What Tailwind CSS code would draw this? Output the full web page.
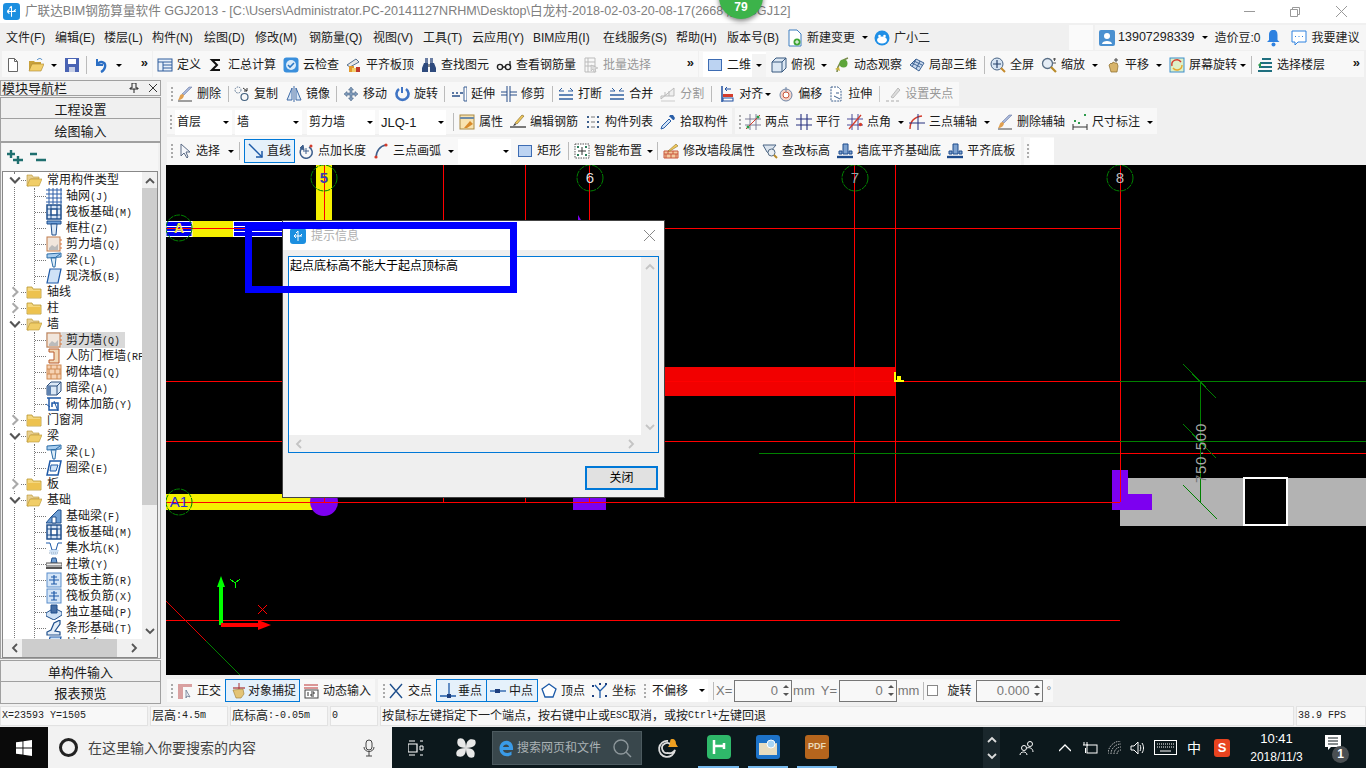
<!DOCTYPE html>
<html lang="zh">
<head>
<meta charset="utf-8">
<title>GGJ2013</title>
<script src="https://cdn.jsdelivr.net/npm/@tailwindcss/browser@4"></script>
</head>
<body class="w-[1366px] h-[768px] overflow-hidden bg-[#f0f0f0] text-[12px] leading-none text-[#1a1a1a] font-['Liberation_Sans','Noto_Sans_CJK_SC',sans-serif]">

<!-- icon sprite -->
<svg class="hidden" xmlns="http://www.w3.org/2000/svg">
  <symbol id="new" viewBox="0 0 16 16"><path d="M3.5 1.5h6l3 3v10h-9z" fill="#fff" stroke="#666"/><path d="M9.5 1.5v3h3" fill="none" stroke="#666"/></symbol>
  <symbol id="open" viewBox="0 0 16 16"><path d="M1 4h5l1 1h6v2H5l-2 6H1z" fill="#c9a23c"/><path d="M4 7h12l-3 7H1z" fill="#f2cf6b" stroke="#a9842c" stroke-width=".6"/><path d="M9 3c2-2 4-2 5 0" stroke="#3f7fc0" fill="none"/></symbol>
  <symbol id="save" viewBox="0 0 16 16"><rect x="1" y="1" width="14" height="14" fill="#4a64b4"/><rect x="4" y="2" width="8" height="5" fill="#fff"/><rect x="5" y="10" width="6" height="5" fill="#c7cfe6"/></symbol>
  <symbol id="undo" viewBox="0 0 16 16"><path d="M4 2v6h6" stroke="#2c6fc4" stroke-width="2" fill="none"/><path d="M4 8c3-5 9-3 8 2-.4 2-2 4-4 5" stroke="#2c6fc4" stroke-width="2.4" fill="none"/></symbol>
  <symbol id="define" viewBox="0 0 16 16"><rect x="1" y="2" width="14" height="12" fill="#e8f0fa" stroke="#2f5c9c"/><path d="M1 5h14M6 5v9M6 8h9M6 11h9" stroke="#2f5c9c"/></symbol>
  <symbol id="sigma" viewBox="0 0 16 16"><path d="M12 3H4l5 5-5 5h8" fill="none" stroke="#111" stroke-width="2"/></symbol>
  <symbol id="cloud" viewBox="0 0 16 16"><rect x=".5" y=".5" width="15" height="15" rx="3" fill="#3a8fdc"/><circle cx="8" cy="8" r="5" fill="#dcecfa"/><path d="M5 8l2 2 4-4" stroke="#2b78c4" stroke-width="1.6" fill="none"/></symbol>
  <symbol id="flat" viewBox="0 0 16 16"><path d="M1 8l9-6 3 3-9 5z" fill="#e7e7e7" stroke="#56708f"/><rect x="3" y="9" width="5" height="6" fill="#e39a2c"/><rect x="10" y="10" width="4" height="5" fill="#c0392b"/><rect x="6" y="11" width="4" height="4" fill="#f2cf6b"/></symbol>
  <symbol id="binoc" viewBox="0 0 16 16"><path d="M4 1h3v5H4zM9 1h3v5H9z" fill="#6b7ea3"/><path d="M3 6h4v9H1v-4zM9 6h4l2 5v4H9z" fill="#2e4a7d"/><path d="M7 7h2v3H7z" fill="#888"/></symbol>
  <symbol id="glasses" viewBox="0 0 16 16"><circle cx="4" cy="10" r="2.6" fill="none" stroke="#222" stroke-width="1.4"/><circle cx="12" cy="10" r="2.6" fill="none" stroke="#222" stroke-width="1.4"/><path d="M6.5 10h3M14 9V4" stroke="#222" stroke-width="1.3" fill="none"/></symbol>
  <symbol id="batch" viewBox="0 0 16 16"><path d="M2 1h10v14H2zM2 5h10M2 9h10M5 1v14" fill="none" stroke="#bbb"/><path d="M8 8l7 3-3 1 1 3-2 0-1-3-2 2z" fill="#ddd" stroke="#aaa" stroke-width=".5"/></symbol>
  <symbol id="square" viewBox="0 0 16 16"><rect x="1.5" y="2.5" width="13" height="11" fill="#bcd3f2" stroke="#3d6cb3"/></symbol>
  <symbol id="box" viewBox="0 0 16 16"><path d="M1 5l4-4h10v10l-4 4H1z" fill="#dbe7f3" stroke="#38597f"/><path d="M1 5h10v10M11 5l4-4" fill="none" stroke="#38597f"/></symbol>
  <symbol id="orbit" viewBox="0 0 16 16"><path d="M3 15C3 9 7 3 14 1" stroke="#7b8b4f" stroke-width="1.6" fill="none"/><circle cx="9.5" cy="6.5" r="4" fill="#5da53a"/><path d="M1 12l4-2 1 4z" fill="#c9b23a"/></symbol>
  <symbol id="cube3" viewBox="0 0 16 16"><path d="M1 8l6-6 8 4-5 8z" fill="#c9d9ee" stroke="#3d6394"/><path d="M5 4l8 4M3 6l8 4M7 2l-4 8M11 4l-4 8" stroke="#3d6394" fill="none"/></symbol>
  <symbol id="full" viewBox="0 0 16 16"><circle cx="7" cy="7" r="6" fill="#d6e4f3" stroke="#4a6484"/><path d="M7 3v8M3 7h8" stroke="#27426b" stroke-width="1.2"/><path d="M11 11l4 4" stroke="#c58a2a" stroke-width="2"/></symbol>
  <symbol id="mag" viewBox="0 0 16 16"><circle cx="6.5" cy="6.5" r="5" fill="#e5edf6" stroke="#5a6f86" stroke-width="1.3"/><path d="M10 10l5 5" stroke="#b98b2a" stroke-width="2.2"/><path d="M12 2h3M13.500 1v3M12 6h3" stroke="#555"/></symbol>
  <symbol id="hand" viewBox="0 0 16 16"><path d="M4 8l2-2 1 1 1-2 2 1 2 0 1 3-1 6H6z" fill="#d8b46a" stroke="#8a6a28" stroke-width=".7"/><path d="M11 1v4M9 3h4" stroke="#444"/></symbol>
  <symbol id="screen" viewBox="0 0 16 16"><rect x="1" y="1" width="14" height="14" fill="#dff0c8" stroke="#3a8dc9"/><path d="M3 9a5 5 0 0 1 9-4" stroke="#d43c2c" stroke-width="1.4" fill="none"/><path d="M13 8a5 5 0 0 1-9 3" stroke="#e5a92c" stroke-width="1.4" fill="none"/></symbol>
  <symbol id="floors" viewBox="0 0 16 16"><path d="M1 14h14M2 10h13M3 6h12M5 2h9" stroke="#1f6f7f" stroke-width="2"/><path d="M1 8l3-3v6z" fill="#2e9b4c"/></symbol>
  <symbol id="brush" viewBox="0 0 16 16"><path d="M15 1L7 9l-2-1 7-7z" fill="#a7b7d8" stroke="#5e6d9c" stroke-width=".5"/><path d="M7 9c0 3-3 5-6 5 2-2 1-5 4-6z" fill="#e0a050"/><path d="M1 15h14" stroke="#444"/></symbol>
  <symbol id="copy" viewBox="0 0 16 16"><circle cx="4" cy="4" r="3" fill="none" stroke="#5b7492" stroke-dasharray="1.500 1"/><circle cx="10.500" cy="11" r="3.500" fill="none" stroke="#42617f" stroke-width="1.200"/><path d="M9 2l4 3M13 2v3h-3" stroke="#333" fill="none"/></symbol>
  <symbol id="mirror" viewBox="0 0 16 16"><path d="M6 2L1 14h5zM10 2l5 12h-5z" fill="#dbe8f6" stroke="#3f6ba6"/><path d="M8 0v16" stroke="#3f6ba6"/></symbol>
  <symbol id="move" viewBox="0 0 16 16"><path d="M8 1l2.500 3H9v3h3V5.500L15 8l-3 2.500V9H9v3h1.500L8 15l-2.500-3H7V9H4v1.500L1 8l3-2.500V7h3V4H5.500z" fill="#7f9ab9" stroke="#3f5a7c" stroke-width=".5"/></symbol>
  <symbol id="rot" viewBox="0 0 16 16"><path d="M5 3a6 6 0 1 0 7 0" fill="none" stroke="#3f74c4" stroke-width="2.600"/><path d="M8 1v6" stroke="#3f74c4" stroke-width="2"/></symbol>
  <symbol id="extend" viewBox="0 0 16 16"><path d="M13 1h3v14h-3z" fill="#fff" stroke="#3a5e93"/><path d="M1 7h2M5 7h2M9 7h3M1 10h8" stroke="#274d88" stroke-width="1.300"/></symbol>
  <symbol id="trim" viewBox="0 0 16 16"><path d="M6 0v16M9 0v16" stroke="#274d88"/><path d="M0 6h6M0 9h6M9 6h7M9 9h7" stroke="#274d88"/></symbol>
  <symbol id="break" viewBox="0 0 16 16"><path d="M1 9h14M1 13h14" stroke="#2e5fa0" stroke-width="1.300"/><path d="M1 5l3-3M1 5h5M15 5l-3-3M15 5h-5" stroke="#2e5fa0" fill="none"/></symbol>
  <symbol id="merge" viewBox="0 0 16 16"><path d="M1 9h14M1 13h14" stroke="#2e5fa0" stroke-width="1.300"/><path d="M6 5L3 2M6 5H1M10 5l3-3M10 5h5" stroke="#2e5fa0" fill="none"/></symbol>
  <symbol id="split" viewBox="0 0 16 16"><path d="M1 13L14 2v8H1zM5 10V6M9 10V5" fill="#eee" stroke="#bbb"/><path d="M1 15h14" stroke="#ccc"/></symbol>
  <symbol id="align" viewBox="0 0 16 16"><path d="M3 0v16" stroke="#1f4fa0" stroke-width="1.500"/><path d="M12 3H6M8 1L6 3l2 2" stroke="#1f4fa0" fill="none"/><rect x="4" y="8" width="10" height="3" fill="#d43c2c"/><rect x="4" y="12" width="10" height="3" fill="#fff" stroke="#1f4fa0"/></symbol>
  <symbol id="offset" viewBox="0 0 16 16"><circle cx="8" cy="9" r="6" fill="#f6d3c8" stroke="#6d86a8"/><circle cx="8" cy="9" r="3" fill="#fff" stroke="#c9563c"/><path d="M8 1v5" stroke="#6d86a8"/></symbol>
  <symbol id="stretch" viewBox="0 0 16 16"><path d="M3 1h7l3 3v11H3z" fill="#fff" stroke="#3d5f8c" stroke-dasharray="2 1"/><path d="M6 10l6 3M8 7h3" stroke="#3d5f8c"/></symbol>
  <symbol id="grab" viewBox="0 0 16 16"><path d="M6 11l7-9 2 2-7 8z" fill="#ddd" stroke="#bbb"/><path d="M1 15h3M6 15h3M11 15h3" stroke="#aaa"/></symbol>
  <symbol id="prop" viewBox="0 0 16 16"><rect x="1" y="1" width="14" height="14" fill="#f8e3b0" stroke="#a98a45"/><path d="M1 4h14" stroke="#6f8ca8" stroke-width="2"/><path d="M5 14l6-7 3 3-6 4z" fill="#d88a2a"/></symbol>
  <symbol id="editbar" viewBox="0 0 16 16"><path d="M14 2L7 10l-2-1 7-8z" fill="#f0c95a" stroke="#7a5e20" stroke-width=".6"/><path d="M5 9l-2 3 3-1z" fill="#333"/><path d="M0 13h16" stroke="#333" stroke-width="1.300"/></symbol>
  <symbol id="list" viewBox="0 0 16 16"><path d="M2 2h2v2H2zM2 7h2v2H2zM2 12h2v2H2zM12 2h2v2h-2zM12 7h2v2h-2zM12 12h2v2h-2z" fill="#3d5f8c"/><path d="M6 3h4M6 8h4M6 13h4" stroke="#777"/></symbol>
  <symbol id="pick" viewBox="0 0 16 16"><path d="M1 15l1-3 7-7 2 2-7 7z" fill="#cfe2f6" stroke="#2a5fa8"/><path d="M9 3l1-2 3 0 2 3-1 2-1 0-3-3z" fill="#2a5fa8"/></symbol>
  <symbol id="twopt" viewBox="0 0 16 16"><path d="M5 0v16M11 0v16M0 5h16M0 11h16" stroke="#6f6f8c" stroke-width=".9"/><path d="M1 15L15 1" stroke="#d43c2c"/><circle cx="3" cy="13" r="1.500" fill="#2e9b4c"/><circle cx="13" cy="3" r="1.500" fill="#2e9b4c"/></symbol>
  <symbol id="par" viewBox="0 0 16 16"><path d="M5 0v16M11 0v16M0 5h16M0 11h16" stroke="#27307f" stroke-width="1.100"/></symbol>
  <symbol id="angle" viewBox="0 0 16 16"><path d="M5 0v16M11 0v16M0 5h16M0 11h16" stroke="#39398c" stroke-width=".9"/><path d="M2 15L14 1" stroke="#d43c2c" stroke-width="1.300"/><circle cx="13.500" cy="10.500" r="1.700" fill="#d43c2c"/></symbol>
  <symbol id="axis3" viewBox="0 0 16 16"><path d="M1 15c0-7 4-12 12-13" stroke="#d43c2c" stroke-width="1.400" fill="none"/><path d="M9 0v16M0 9h16" stroke="#27307f"/></symbol>
  <symbol id="dim" viewBox="0 0 16 16"><path d="M1 13h14M1 10v6M15 10v6" stroke="#333"/><path d="M2 6h2v2H2zM12 0h2v2h-2zM6 8h2v2H6z" fill="#2e9b4c"/></symbol>
  <symbol id="pointer" viewBox="0 0 16 16"><path d="M5 1v12l3-3 3 5 1-1-2-5h4z" fill="#f4f6fa" stroke="#5a6a84"/></symbol>
  <symbol id="line" viewBox="0 0 16 16"><path d="M1 1l13 13" stroke="#1c5aa8" stroke-width="1.500"/><path d="M14 8v6H8" stroke="#1c5aa8" stroke-width="1.500" fill="none"/></symbol>
  <symbol id="ptlen" viewBox="0 0 16 16"><path d="M11 4a6 6 0 1 1-7 1" fill="none" stroke="#3e5f8c" stroke-width="1.500"/><path d="M5 2l1 5-4-2zM5 8h6M8 5v6" fill="#3e5f8c" stroke="#3e5f8c"/><circle cx="13" cy="3" r="1.500" fill="#d43c2c"/></symbol>
  <symbol id="arc" viewBox="0 0 16 16"><path d="M3 15C3 8 7 3 13 2" fill="none" stroke="#3e5f8c" stroke-width="1.500"/><circle cx="13" cy="2" r="1.600" fill="#d43c2c"/><circle cx="3" cy="14" r="1.600" fill="#d43c2c"/></symbol>
  <symbol id="smart" viewBox="0 0 16 16"><rect x="1" y="1" width="14" height="14" fill="#fff" stroke="#555" stroke-dasharray="1.500 1"/><path d="M8 4v8M4 8h8" stroke="#333"/><path d="M3 3h2v2H3zM11 3h2v2h-2zM3 11h2v2H3zM11 11h2v2h-2z" fill="#2e7f5c"/></symbol>
  <symbol id="wallprop" viewBox="0 0 16 16"><path d="M1 8h14v7H1z" fill="#f3c9a0" stroke="#c9563c"/><path d="M1 11h14M5 8v3M10 8v3M3 11v4M8 11v4M13 11v4" stroke="#c9563c"/><path d="M5 8l8-7 2 2-8 5z" fill="#f0c95a" stroke="#7a5e20" stroke-width=".5"/></symbol>
  <symbol id="check" viewBox="0 0 16 16"><path d="M1 2h13L8 9v2L5 9z" fill="#dbe4ee" stroke="#4a6484"/><circle cx="9.500" cy="9.500" r="3.500" fill="#e9eef4" stroke="#556b84"/><path d="M12 12l3 3" stroke="#b98b2a" stroke-width="2"/></symbol>
  <symbol id="base" viewBox="0 0 16 16"><path d="M6 1h5v10H6zM2 8h3v3H2zM12 8h3v3h-3z" fill="#7fa2cf" stroke="#1c4a8c"/><path d="M0 14h16" stroke="#1c4a8c" stroke-width="2.400"/></symbol>
  <symbol id="ortho" viewBox="0 0 16 16"><path d="M1 1h14v3H6v12H1z" fill="#d9a0a0"/><path d="M9 7l4 7-3-1-1 2z" fill="#eef2f7" stroke="#5a6a84" stroke-width=".7"/></symbol>
  <symbol id="snap" viewBox="0 0 16 16"><path d="M3 5h12" stroke="#a33" stroke-width="1.200"/><path d="M9 0v6" stroke="#a33"/><path d="M3 7l10-1 1 5-3 4H6z" fill="#e3c476" stroke="#9a7a30" stroke-width=".6"/></symbol>
  <symbol id="dyn" viewBox="0 0 16 16"><path d="M1 2h14M1 5h14" stroke="#b33" stroke-width="1.200"/><rect x="2" y="7" width="13" height="8" fill="#fff" stroke="#444"/><path d="M5 9v4M8 9h3v2H8v2h3" stroke="#333" fill="none"/></symbol>
  <symbol id="cross" viewBox="0 0 16 16"><path d="M2 1l12 14M14 1L2 15" stroke="#1f4f8c" stroke-width="1.400"/></symbol>
  <symbol id="perp" viewBox="0 0 16 16"><path d="M0 13h16M9 0v13" stroke="#1c5aa8" stroke-width="1.300"/><rect x="7" y="11" width="4" height="4" fill="#1c3f7f"/></symbol>
  <symbol id="midp" viewBox="0 0 16 16"><path d="M0 8h16" stroke="#1c5aa8" stroke-width="1.300"/><rect x="5" y="6" width="5" height="4" fill="#1c3f7f"/></symbol>
  <symbol id="vert" viewBox="0 0 16 16"><path d="M8 1l7 5-3 8H4L1 6z" fill="#fff" stroke="#1c5aa8" stroke-width="1.300"/></symbol>
  <symbol id="coord" viewBox="0 0 16 16"><path d="M3 2l5 6 6-6M8 8v7" stroke="#1c5aa8" fill="none" stroke-width="1.300"/><path d="M0 2h2v2H0zM13 0h2v2h-2zM0 12h2v2H0zM13 12h2v2h-2zM7 0h2v2H7z" fill="#1c3f7f"/></symbol>
  <symbol id="folder" viewBox="0 0 16 16"><path d="M1 3h5l1 2h8v9H1z" fill="#f5d77e" stroke="#b8962f" stroke-width=".8"/><path d="M1.500 7h13v6.500h-13z" fill="#edc24f"/></symbol>
  <symbol id="folderopen" viewBox="0 0 16 16"><path d="M1 3h5l1 2h6v2H5l-2 7H1z" fill="#e8cf8f" stroke="#b8962f" stroke-width=".6"/><path d="M4 7h12l-3 7H1z" fill="#f0cd68" stroke="#b8962f" stroke-width=".6"/></symbol>
  <symbol id="t-grid" viewBox="0 0 16 16"><path d="M3 0v16M7 0v16M11 0v16M15 0v16M0 2h16M0 6h16M0 10h16M0 14h16" stroke="#2d5ea8"/></symbol>
  <symbol id="t-raft" viewBox="0 0 16 16"><rect x="1" y="1" width="14" height="14" fill="#d9e6f5" stroke="#1f4f8c" stroke-width="1.500"/><rect x="5" y="5" width="6" height="6" fill="#fff" stroke="#1f4f8c"/><path d="M1 5h14M1 11h14M5 1v14M11 1v14" stroke="#1f4f8c"/></symbol>
  <symbol id="t-col" viewBox="0 0 16 16"><path d="M1 1h14v3H1z" fill="#6fa0d8" stroke="#1f4f8c"/><path d="M5 4h6l-1 11H6z" fill="#dbe8f6" stroke="#1f4f8c"/></symbol>
  <symbol id="t-wall" viewBox="0 0 16 16"><rect x="1" y="1" width="13" height="14" fill="#f1e6dc" stroke="#c07a4a"/><path d="M3 12l3-3 3 2 3-3v6H3z" fill="#bbb"/><path d="M14 4h2M14 8h2M14 12h2" stroke="#d8743a"/></symbol>
  <symbol id="t-beam" viewBox="0 0 16 16"><path d="M1 2l14-1v4L1 6z" fill="#a8cdee" stroke="#2d6ea8"/><path d="M5 6h5l-1 9H7z" fill="#dcecf8" stroke="#2d6ea8"/><path d="M10 5l4-3" stroke="#2d6ea8"/></symbol>
  <symbol id="t-slab" viewBox="0 0 16 16"><path d="M4 1h11l-3 14H1z" fill="#cfe2f6" stroke="#1f5aa8" stroke-width="1.200"/></symbol>
  <symbol id="t-door" viewBox="0 0 16 16"><path d="M3 1h10v14H3v-3h5V4H3z" fill="#f2d9b8" stroke="#b85a2a"/></symbol>
  <symbol id="t-brick" viewBox="0 0 16 16"><rect x="1" y="1" width="14" height="14" fill="#f6d3b4" stroke="#d08a52"/><path d="M1 5h14M1 10h14M5 1v4M11 1v4M3 5v5M9 5v5M14 5v5M5 10v5M11 10v5" stroke="#d08a52"/></symbol>
  <symbol id="t-dark" viewBox="0 0 16 16"><path d="M1 6l4-4h10v9l-4 4H1z" fill="#dbe8f6" stroke="#2d4f7c"/><path d="M1 6h10v9M11 6l4-4" fill="none" stroke="#2d4f7c"/><rect x="1" y="6" width="4" height="9" fill="#5e82b0"/></symbol>
  <symbol id="t-rebar" viewBox="0 0 16 16"><path d="M1 2h14M3 2v12h9V7H6v4" fill="none" stroke="#1f5aa8" stroke-width="1.500"/><path d="M0 8l4 3M8 5l4 10" stroke="#1f5aa8"/></symbol>
  <symbol id="t-ring" viewBox="0 0 16 16"><path d="M4 1h11l-3 14H1z" fill="#fff" stroke="#1f5aa8" stroke-width="1.500"/><path d="M5 5h7l-2 6H4z" fill="#cfe2f6" stroke="#1f5aa8"/></symbol>
  <symbol id="t-fbeam" viewBox="0 0 16 16"><path d="M0 15l5-6 7-7 3 0v13z" fill="#6f9fd4" stroke="#1f4f8c"/><path d="M6 15V9h4v6z" fill="#fff" stroke="#1f4f8c"/></symbol>
  <symbol id="t-pit" viewBox="0 0 16 16"><path d="M0 3h4l2 7h4l2-7h4" fill="none" stroke="#1f5aa8"/><path d="M3 10h10l-2 5H5z" fill="#cfe2f6"/><path d="M3 13h10" stroke="#9ab" stroke-dasharray="1 1"/></symbol>
  <symbol id="t-pier" viewBox="0 0 16 16"><path d="M6 2h4l1 5H5z" fill="#6f9fd4" stroke="#1f4f8c"/><rect x="0" y="7" width="16" height="3" fill="#eee" stroke="#555"/><rect x="0" y="11" width="16" height="2" fill="#555"/></symbol>
  <symbol id="t-rmain" viewBox="0 0 16 16"><rect x="1" y="1" width="14" height="14" fill="#d4e5f7" stroke="#5a8ecb"/><path d="M3 8h10M8 3v9M5 5h6M5 12h6" stroke="#1f5aa8" stroke-width="1.200"/></symbol>
  <symbol id="t-iso" viewBox="0 0 16 16"><path d="M0 9l8-5 8 4v3l-8 5-8-4z" fill="#cfe2f6" stroke="#1f4f8c"/><path d="M5 1h6v8H5z" fill="#466fa5" stroke="#1f4f8c"/></symbol>
  <symbol id="t-strip" viewBox="0 0 16 16"><path d="M1 15v-3l4-2 3-7 6-3v4L9 11l5 1v3z" fill="#e4eef8" stroke="#1f4f8c" stroke-width="1.200"/></symbol>
  <symbol id="up" viewBox="0 0 10 10"><path d="M1 7l4-4 4 4" fill="none" stroke="currentColor" stroke-width="1.800"/></symbol>
  <symbol id="down" viewBox="0 0 10 10"><path d="M1 3l4 4 4-4" fill="none" stroke="currentColor" stroke-width="1.800"/></symbol>
  <symbol id="left" viewBox="0 0 10 10"><path d="M7 1L3 5l4 4" fill="none" stroke="currentColor" stroke-width="1.800"/></symbol>
  <symbol id="right" viewBox="0 0 10 10"><path d="M3 1l4 4-4 4" fill="none" stroke="currentColor" stroke-width="1.800"/></symbol>
  <symbol id="appmark" viewBox="0 0 16 16"><rect width="16" height="16" rx="3" fill="#1c8fe0"/><path d="M8 3v10M4 8h8M4 8l2-2M4 8l2 2M12 6l-2 2M8 3L6 5" stroke="#fff" fill="none"/></symbol>
</svg>

<!-- title bar -->
<header class="h-[23px] bg-white flex items-center relative">
  <svg class="w-[17px] h-[17px] ml-[3px]"><use href="#appmark"/></svg>
  <span class="ml-[5px] text-[12.6px] text-[#808080] whitespace-nowrap">广联达BIM钢筋算量软件 GGJ2013 - [C:\Users\Administrator.PC-20141127NRHM\Desktop\白龙村-2018-02-03-20-08-17(2668 版).GGJ12]</span>
  <div class="absolute left-[719px] top-[-25px] w-[44px] h-[44px] rounded-full bg-[#3cb34a] shadow-[0_2px_5px_rgba(0,0,0,0.5)] flex items-end justify-center pb-[6px] text-white font-bold text-[12px]">79</div>
  <div class="ml-auto flex items-center text-[#8a8a8a]">
    <span class="w-[11px] h-px bg-[#999] mr-[35px]"></span>
    <svg class="w-[10px] h-[10px] mr-[36px]" viewBox="0 0 10 10"><path d="M.5 2.500h7v7h-7zM2.500 2.500v-2h7v7h-2" fill="none" stroke="#999"/></svg>
    <svg class="w-[11px] h-[11px] mr-[19px]" viewBox="0 0 11 11"><path d="M0 0l11 11M11 0L0 11" stroke="#999"/></svg>
  </div>
</header>

<!-- menu bar -->
<nav class="h-[27px] pt-[2px] flex items-center text-[#222] whitespace-nowrap">
  <a class="ml-[6px] w-[49px]">文件(F)</a>
  <a class="w-[49px]">编辑(E)</a>
  <a class="w-[48px]">楼层(L)</a>
  <a class="w-[52px]">构件(N)</a>
  <a class="w-[51px]">绘图(D)</a>
  <a class="w-[54px]">修改(M)</a>
  <a class="w-[64px]">钢筋量(Q)</a>
  <a class="w-[50px]">视图(V)</a>
  <a class="w-[49px]">工具(T)</a>
  <a class="w-[61px]">云应用(Y)</a>
  <a class="w-[70px]">BIM应用(I)</a>
  <a class="w-[73px]">在线服务(S)</a>
  <a class="w-[51px]">帮助(H)</a>
  <a class="w-[60px]">版本号(B)</a>
  <svg class="w-4 h-[18px]" viewBox="0 0 16 18"><path d="M2 1h8l4 4v12H2z" fill="#fff" stroke="#3f7fc0"/><circle cx="10" cy="13" r="3.500" fill="#3fa535"/><path d="M8 13h4M10 11v4" stroke="#fff"/></svg>
  <a class="ml-[4px]">新建变更</a>
  <span class="ml-[7px] w-0 h-0 border-x-[3px] border-t-[3px] border-x-transparent border-t-black"></span>
  <svg class="ml-[6px] w-4 h-4" viewBox="0 0 16 16"><circle cx="8" cy="8" r="7.500" fill="#1f8fe6"/><ellipse cx="8" cy="10" rx="5" ry="3.500" fill="#fff"/><circle cx="5.500" cy="6" r="1.300" fill="#fff"/><circle cx="10.500" cy="6" r="1.300" fill="#fff"/></svg>
  <a class="ml-[4px]">广小二</a>
  <span class="ml-[139px] w-[24px] h-[25px] bg-[#fafafa]"></span>
  <div class="ml-[2px] flex items-center bg-[#f6f6f6] h-[25px] flex-1">
    <svg class="ml-[4px] w-4 h-4" viewBox="0 0 16 16"><rect width="16" height="16" rx="2" fill="#4a90d0"/><circle cx="8" cy="6" r="3" fill="#fff"/><path d="M3 14c0-4 10-4 10 0z" fill="#fff"/></svg>
    <span class="ml-[3px] text-[12.5px]">13907298339</span>
    <span class="ml-[7px] w-0 h-0 border-x-[3px] border-t-[3px] border-x-transparent border-t-black"></span>
    <span class="ml-[7px]">造价豆:0</span>
    <svg class="ml-[6px] w-[13px] h-[18px]" viewBox="0 0 13 18"><path d="M6.500 1c3 0 4 2 4 5v5l2 2H0l2-2V6c0-3 1-5 4.500-5z" fill="#2f82e0"/><circle cx="6.500" cy="15.500" r="2" fill="#2f82e0"/></svg>
    <svg class="ml-[11px] w-4 h-4" viewBox="0 0 16 16"><path d="M1 1h14v11H7l-3 3v-3H1z" fill="#fff" stroke="#2f82e0"/><path d="M4 6.500h1M7.500 6.500h1M11 6.500h1" stroke="#2f82e0"/></svg>
    <span class="ml-[5px]">我要建议</span>
  </div>
</nav>

<!-- main toolbar -->
<div class="h-[30px] pt-px flex whitespace-nowrap [&_svg]:w-4 [&_svg]:h-4">
  <div class="ml-[2px] w-[150px] h-[26px] pt-[2px] bg-[#f8f8f8] flex items-center">
    <svg class="ml-[3px]"><use href="#new"/></svg>
    <svg class="ml-[7px]"><use href="#open"/></svg>
    <span class="ml-[7px] w-0 h-0 border-x-[3px] border-t-[3px] border-x-transparent border-t-black"></span>
    <svg class="ml-[7px]"><use href="#save"/></svg>
    <span class="ml-[6px] w-px h-[18px] bg-[#bbb]"></span>
    <svg class="ml-[6px]"><use href="#undo"/></svg>
    <span class="ml-[7px] w-0 h-0 border-x-[3px] border-t-[3px] border-x-transparent border-t-black"></span>
    <span class="ml-auto mr-[4px] mb-[6px] text-[13px] font-bold">»</span>
  </div>
  <div class="ml-px w-[545px] h-[26px] pt-[2px] bg-[#f8f8f8] flex items-center">
    <div class="ml-[4px] flex items-center gap-1"><svg><use href="#define"/></svg><span>定义</span></div>
    <div class="ml-[7px] flex items-center gap-1"><svg><use href="#sigma"/></svg><span>汇总计算</span></div>
    <div class="ml-[7px] flex items-center gap-1"><svg><use href="#cloud"/></svg><span>云检查</span></div>
    <div class="ml-[7px] flex items-center gap-1"><svg><use href="#flat"/></svg><span>平齐板顶</span></div>
    <div class="ml-[7px] flex items-center gap-1"><svg><use href="#binoc"/></svg><span>查找图元</span></div>
    <div class="ml-[7px] flex items-center gap-1"><svg><use href="#glasses"/></svg><span>查看钢筋量</span></div>
    <div class="ml-[7px] flex items-center gap-1 text-[#999]"><svg><use href="#batch"/></svg><span>批量选择</span></div>
    <span class="ml-auto mr-[4px] mb-[6px] text-[13px] font-bold">»</span>
  </div>
  <div class="ml-px flex-1 mr-[2px] h-[26px] bg-[#f8f8f8] flex items-center">
    <div class="ml-[4px] w-[63px] h-[25px] pt-[2px] bg-white flex items-center">
      <div class="ml-[4px] flex items-center gap-1"><svg><use href="#square"/></svg><span>二维</span></div>
      <span class="flex-1 h-full ml-[1px] bg-[#f3f3f3] flex items-center justify-center"><span class="w-0 h-0 border-x-[3px] border-t-[3px] border-x-transparent border-t-black"></span></span>
    </div>
    <div class="flex flex-1 items-center h-full pt-[2px]">
      <div class="ml-[5px] flex items-center gap-1"><svg><use href="#box"/></svg><span>俯视</span></div>
      <span class="ml-[6px] w-0 h-0 border-x-[3px] border-t-[3px] border-x-transparent border-t-black"></span>
      <div class="ml-[7px] flex items-center gap-1"><svg><use href="#orbit"/></svg><span>动态观察</span></div>
      <div class="ml-[7px] flex items-center gap-1"><svg><use href="#cube3"/></svg><span>局部三维</span></div>
      <span class="ml-[7px] w-px h-[18px] bg-[#bbb]"></span>
      <div class="ml-[5px] flex items-center gap-1"><svg><use href="#full"/></svg><span>全屏</span></div>
      <div class="ml-[7px] flex items-center gap-1"><svg><use href="#mag"/></svg><span>缩放</span></div>
      <span class="ml-[7px] w-0 h-0 border-x-[3px] border-t-[3px] border-x-transparent border-t-black"></span>
      <div class="ml-[7px] flex items-center gap-1"><svg><use href="#hand"/></svg><span>平移</span></div>
      <span class="ml-[7px] w-0 h-0 border-x-[3px] border-t-[3px] border-x-transparent border-t-black"></span>
      <div class="ml-[7px] flex items-center gap-1"><svg><use href="#screen"/></svg><span>屏幕旋转</span></div>
      <span class="ml-[3px] w-0 h-0 border-x-[3px] border-t-[3px] border-x-transparent border-t-black"></span>
      <span class="ml-[5px] w-px h-[18px] bg-[#bbb]"></span>
      <div class="ml-[5px] flex items-center gap-1"><svg><use href="#floors"/></svg><span>选择楼层</span></div>
      <span class="ml-auto mr-[4px] mb-[6px] text-[13px] font-bold">»</span>
    </div>
  </div>
</div>

<main class="h-[625px] flex">
  <!-- module navigator -->
  <aside class="w-[161px] flex flex-col shrink-0">
    <div class="h-[16px] border border-[#a0a0a0] bg-[#f0f0f0] flex items-center pl-px text-[13px]">
      <span class="flex-1">模块导航栏</span>
      <svg class="w-[10px] h-[10px]" viewBox="0 0 10 10"><path d="M3 0h4v5h2v1H1V5h2zM5 6v4" fill="none" stroke="#222"/></svg>
      <svg class="ml-[10px] mr-[3px] w-[8px] h-[8px]" viewBox="0 0 8 8"><path d="M0 0l8 8M8 0L0 8" stroke="#333"/></svg>
    </div>
    <button class="mt-px h-[22px] pt-[2px] w-full border border-[#a0a0a0] bg-[#f0f0f0] text-[13px]">工程设置</button>
    <button class="h-[23px] pt-[2px] w-full border border-t-0 border-[#a0a0a0] bg-[#f0f0f0] text-[13px]">绘图输入</button>
    <div class="h-[517px] border border-[#a0a0a0] bg-[#f0f0f0] flex flex-col pl-px pr-[2px]">
      <div class="h-[28px] flex items-center bg-[#f6f6f6]">
        <svg class="ml-[5px] w-4 h-4" viewBox="0 0 16 16"><path d="M0 5h8M4 1v8M6 11h10M11 7v8" stroke="#1f6f6f" stroke-width="2.400"/></svg>
        <svg class="ml-[7px] w-4 h-4" viewBox="0 0 16 16"><path d="M0 5h7M6 11h10" stroke="#1f6f6f" stroke-width="2.400"/></svg>
      </div>
      <div class="flex-1 flex flex-col bg-white border border-[#888] min-h-0">
        <div class="flex-1 flex min-h-0">
          <div class="flex-1 overflow-hidden bg-white whitespace-nowrap pl-[11px] [&_i]:not-italic [&_i]:font-['Liberation_Mono',monospace] [&_i]:text-[10px] [&_svg]:w-4 [&_svg]:h-4 [&_svg]:shrink-0 [&_span]:shrink-0">
            <div class="border-l border-dotted border-[#777]">
              <div class="h-4 flex items-center"><svg class="-ml-[6px] bg-white text-[#555] !w-3 !h-3"><use href="#down"/></svg><span class="w-[5px] border-t border-dotted border-[#777]"></span><svg><use href="#folderopen"/></svg><span class="ml-[5px]">常用构件类型</span></div>
              <div class="ml-[19px] border-l border-dotted border-[#777]">
                <div class="h-4 flex items-center"><span class="w-[11px] border-t border-dotted border-[#777]"></span><svg><use href="#t-grid"/></svg><span class="ml-[4px]">轴网<i>(J)</i></span></div>
                <div class="h-4 flex items-center"><span class="w-[11px] border-t border-dotted border-[#777]"></span><svg><use href="#t-raft"/></svg><span class="ml-[4px]">筏板基础<i>(M)</i></span></div>
                <div class="h-4 flex items-center"><span class="w-[11px] border-t border-dotted border-[#777]"></span><svg><use href="#t-col"/></svg><span class="ml-[4px]">框柱<i>(Z)</i></span></div>
                <div class="h-4 flex items-center"><span class="w-[11px] border-t border-dotted border-[#777]"></span><svg><use href="#t-wall"/></svg><span class="ml-[4px]">剪力墙<i>(Q)</i></span></div>
                <div class="h-4 flex items-center"><span class="w-[11px] border-t border-dotted border-[#777]"></span><svg><use href="#t-beam"/></svg><span class="ml-[4px]">梁<i>(L)</i></span></div>
                <div class="h-4 flex items-center"><span class="w-[11px] border-t border-dotted border-[#777]"></span><svg><use href="#t-slab"/></svg><span class="ml-[4px]">现浇板<i>(B)</i></span></div>
              </div>
              <div class="h-4 flex items-center"><svg class="-ml-[6px] bg-white text-[#aaa] !w-3 !h-3"><use href="#right"/></svg><span class="w-[5px] border-t border-dotted border-[#777]"></span><svg><use href="#folder"/></svg><span class="ml-[5px]">轴线</span></div>
              <div class="h-4 flex items-center"><svg class="-ml-[6px] bg-white text-[#aaa] !w-3 !h-3"><use href="#right"/></svg><span class="w-[5px] border-t border-dotted border-[#777]"></span><svg><use href="#folder"/></svg><span class="ml-[5px]">柱</span></div>
              <div class="h-4 flex items-center"><svg class="-ml-[6px] bg-white text-[#555] !w-3 !h-3"><use href="#down"/></svg><span class="w-[5px] border-t border-dotted border-[#777]"></span><svg><use href="#folderopen"/></svg><span class="ml-[5px]">墙</span></div>
              <div class="ml-[19px] border-l border-dotted border-[#777]">
                <div class="h-4 flex items-center"><span class="w-[11px] border-t border-dotted border-[#777]"></span><svg class="bg-[#e0e0e0]"><use href="#t-wall"/></svg><span class="pl-[4px] pr-[5px] h-4 leading-4 bg-[#d9d9d9]">剪力墙<i>(Q)</i></span></div>
                <div class="h-4 flex items-center"><span class="w-[11px] border-t border-dotted border-[#777]"></span><svg><use href="#t-door"/></svg><span class="ml-[4px]">人防门框墙<i>(RF)</i></span></div>
                <div class="h-4 flex items-center"><span class="w-[11px] border-t border-dotted border-[#777]"></span><svg><use href="#t-brick"/></svg><span class="ml-[4px]">砌体墙<i>(Q)</i></span></div>
                <div class="h-4 flex items-center"><span class="w-[11px] border-t border-dotted border-[#777]"></span><svg><use href="#t-dark"/></svg><span class="ml-[4px]">暗梁<i>(A)</i></span></div>
                <div class="h-4 flex items-center"><span class="w-[11px] border-t border-dotted border-[#777]"></span><svg><use href="#t-rebar"/></svg><span class="ml-[4px]">砌体加筋<i>(Y)</i></span></div>
              </div>
              <div class="h-4 flex items-center"><svg class="-ml-[6px] bg-white text-[#aaa] !w-3 !h-3"><use href="#right"/></svg><span class="w-[5px] border-t border-dotted border-[#777]"></span><svg><use href="#folder"/></svg><span class="ml-[5px]">门窗洞</span></div>
              <div class="h-4 flex items-center"><svg class="-ml-[6px] bg-white text-[#555] !w-3 !h-3"><use href="#down"/></svg><span class="w-[5px] border-t border-dotted border-[#777]"></span><svg><use href="#folderopen"/></svg><span class="ml-[5px]">梁</span></div>
              <div class="ml-[19px] border-l border-dotted border-[#777]">
                <div class="h-4 flex items-center"><span class="w-[11px] border-t border-dotted border-[#777]"></span><svg><use href="#t-beam"/></svg><span class="ml-[4px]">梁<i>(L)</i></span></div>
                <div class="h-4 flex items-center"><span class="w-[11px] border-t border-dotted border-[#777]"></span><svg><use href="#t-ring"/></svg><span class="ml-[4px]">圈梁<i>(E)</i></span></div>
              </div>
              <div class="h-4 flex items-center"><svg class="-ml-[6px] bg-white text-[#aaa] !w-3 !h-3"><use href="#right"/></svg><span class="w-[5px] border-t border-dotted border-[#777]"></span><svg><use href="#folder"/></svg><span class="ml-[5px]">板</span></div>
              <div class="h-4 flex items-center"><svg class="-ml-[6px] bg-white text-[#555] !w-3 !h-3"><use href="#down"/></svg><span class="w-[5px] border-t border-dotted border-[#777]"></span><svg><use href="#folderopen"/></svg><span class="ml-[5px]">基础</span></div>
              <div class="ml-[19px] border-l border-dotted border-[#777]">
                <div class="h-4 flex items-center"><span class="w-[11px] border-t border-dotted border-[#777]"></span><svg><use href="#t-fbeam"/></svg><span class="ml-[4px]">基础梁<i>(F)</i></span></div>
                <div class="h-4 flex items-center"><span class="w-[11px] border-t border-dotted border-[#777]"></span><svg><use href="#t-raft"/></svg><span class="ml-[4px]">筏板基础<i>(M)</i></span></div>
                <div class="h-4 flex items-center"><span class="w-[11px] border-t border-dotted border-[#777]"></span><svg><use href="#t-pit"/></svg><span class="ml-[4px]">集水坑<i>(K)</i></span></div>
                <div class="h-4 flex items-center"><span class="w-[11px] border-t border-dotted border-[#777]"></span><svg><use href="#t-pier"/></svg><span class="ml-[4px]">柱墩<i>(Y)</i></span></div>
                <div class="h-4 flex items-center"><span class="w-[11px] border-t border-dotted border-[#777]"></span><svg><use href="#t-rmain"/></svg><span class="ml-[4px]">筏板主筋<i>(R)</i></span></div>
                <div class="h-4 flex items-center"><span class="w-[11px] border-t border-dotted border-[#777]"></span><svg><use href="#t-rmain"/></svg><span class="ml-[4px]">筏板负筋<i>(X)</i></span></div>
                <div class="h-4 flex items-center"><span class="w-[11px] border-t border-dotted border-[#777]"></span><svg><use href="#t-iso"/></svg><span class="ml-[4px]">独立基础<i>(P)</i></span></div>
                <div class="h-4 flex items-center"><span class="w-[11px] border-t border-dotted border-[#777]"></span><svg><use href="#t-strip"/></svg><span class="ml-[4px]">条形基础<i>(T)</i></span></div>
                <div class="h-4 flex items-center"><span class="w-[11px] border-t border-dotted border-[#777]"></span><svg><use href="#t-slab"/></svg><span class="ml-[4px]">桩承台<i>(V)</i></span></div>
              </div>
            </div>
          </div>
          <div class="w-[15px] bg-[#f0f0f0] flex flex-col items-center text-[#555]">
            <svg class="mt-[4px] w-[10px] h-[10px]"><use href="#up"/></svg>
            <span class="mt-[2px] w-full h-[317px] bg-[#cdcdcd]"></span>
            <svg class="mt-auto mb-[3px] w-[10px] h-[10px]"><use href="#down"/></svg>
          </div>
        </div>
        <div class="h-[18px] bg-[#f0f0f0] flex items-center text-[#555]">
          <svg class="ml-[7px] w-[10px] h-[10px]"><use href="#left"/></svg>
          <span class="ml-[2px] w-[95px] h-full bg-[#cdcdcd]"></span>
          <svg class="ml-[12px] w-[10px] h-[10px]"><use href="#right"/></svg>
        </div>
      </div>
    </div>
    <button class="mt-px h-[22px] pt-[2px] w-full border border-[#a0a0a0] bg-[#f0f0f0] text-[13px]">单构件输入</button>
    <button class="h-[22px] pt-[2px] w-full border border-t-0 border-[#a0a0a0] bg-[#f0f0f0] text-[13px]">报表预览</button>
  </aside>

  <section class="ml-[5px] flex-1 flex flex-col min-w-0 whitespace-nowrap [&_svg.t]:w-4 [&_svg.t]:h-4">
    <!-- edit toolbar -->
    <div class="h-[27px] pt-[2px]">
      <div class="ml-px w-fit h-[24px] pr-[6px] bg-[#f8f8f8] flex items-center">
        <span class="ml-[4px] w-[2px] h-[14px] border-l-2 border-dotted border-[#aaa]"></span>
        <div class="ml-[4px] flex items-center gap-1"><svg class="t"><use href="#brush"/></svg><span>删除</span></div>
        <span class="ml-[7px] w-px h-[16px] bg-[#bbb]"></span>
        <div class="ml-[5px] flex items-center gap-1"><svg class="t"><use href="#copy"/></svg><span>复制</span></div>
        <div class="ml-[8px] flex items-center gap-1"><svg class="t"><use href="#mirror"/></svg><span>镜像</span></div>
        <span class="ml-[6px] w-px h-[16px] bg-[#bbb]"></span>
        <div class="ml-[6px] flex items-center gap-1"><svg class="t"><use href="#move"/></svg><span>移动</span></div>
        <div class="ml-[7px] flex items-center gap-1"><svg class="t"><use href="#rot"/></svg><span>旋转</span></div>
        <span class="ml-[6px] w-px h-[16px] bg-[#bbb]"></span>
        <div class="ml-[6px] flex items-center gap-1"><svg class="t"><use href="#extend"/></svg><span>延伸</span></div>
        <div class="ml-[6px] flex items-center gap-1"><svg class="t"><use href="#trim"/></svg><span>修剪</span></div>
        <span class="ml-[7px] w-px h-[16px] bg-[#bbb]"></span>
        <div class="ml-[5px] flex items-center gap-1"><svg class="t"><use href="#break"/></svg><span>打断</span></div>
        <div class="ml-[7px] flex items-center gap-1"><svg class="t"><use href="#merge"/></svg><span>合并</span></div>
        <div class="ml-[7px] flex items-center gap-1 text-[#999]"><svg class="t"><use href="#split"/></svg><span>分割</span></div>
        <span class="ml-[7px] w-px h-[16px] bg-[#bbb]"></span>
        <div class="ml-[7px] flex items-center gap-1"><svg class="t"><use href="#align"/></svg><span>对齐</span></div>
        <span class="ml-[2px] w-0 h-0 border-x-[3px] border-t-[3px] border-x-transparent border-t-black"></span>
        <div class="ml-[7px] flex items-center gap-1"><svg class="t"><use href="#offset"/></svg><span>偏移</span></div>
        <div class="ml-[6px] flex items-center gap-1"><svg class="t"><use href="#stretch"/></svg><span>拉伸</span></div>
        <span class="ml-[7px] w-px h-[16px] bg-[#ccc]"></span>
        <div class="ml-[5px] flex items-center gap-1 text-[#999]"><svg class="t"><use href="#grab"/></svg><span>设置夹点</span></div>
      </div>
    </div>
    <!-- floor/component toolbar -->
    <div class="h-[28px] pt-px flex">
      <div class="ml-px w-[565px] h-[26px] pt-[2px] bg-[#f8f8f8] flex items-center">
        <span class="ml-[3px] w-[2px] h-[14px] border-l-2 border-dotted border-[#aaa]"></span>
        <div class="ml-[3px] w-[57px] h-[25px] bg-white flex items-center justify-between pl-[2px] pr-[3px]"><span>首层</span><span class="w-0 h-0 border-x-[3px] border-t-[3px] border-x-transparent border-t-black"></span></div>
        <div class="ml-[3px] w-[67px] h-[25px] bg-white flex items-center justify-between pl-[2px] pr-[3px]"><span>墙</span><span class="w-0 h-0 border-x-[3px] border-t-[3px] border-x-transparent border-t-black"></span></div>
        <div class="ml-[5px] w-[68px] h-[25px] bg-white flex items-center justify-between pl-[2px] pr-[2px]"><span>剪力墙</span><span class="w-0 h-0 border-x-[3px] border-t-[3px] border-x-transparent border-t-black"></span></div>
        <div class="ml-[4px] w-[67px] h-[25px] bg-white flex items-center justify-between pl-[2px] pr-[2px]"><span class="text-[13px]">JLQ-1</span><span class="w-0 h-0 border-x-[3px] border-t-[3px] border-x-transparent border-t-black"></span></div>
        <span class="ml-[7px] w-px h-[18px] bg-[#bbb]"></span>
        <div class="ml-[5px] flex items-center gap-1"><svg class="t"><use href="#prop"/></svg><span>属性</span></div>
        <div class="ml-[7px] flex items-center gap-1"><svg class="t"><use href="#editbar"/></svg><span>编辑钢筋</span></div>
        <div class="ml-[7px] flex items-center gap-1"><svg class="t"><use href="#list"/></svg><span>构件列表</span></div>
        <div class="ml-[7px] flex items-center gap-1"><svg class="t"><use href="#pick"/></svg><span>拾取构件</span></div>
      </div>
      <div class="ml-[3px] w-[422px] h-[26px] pt-[2px] bg-[#f8f8f8] flex items-center">
        <span class="ml-[4px] w-[2px] h-[14px] border-l-2 border-dotted border-[#aaa]"></span>
        <div class="ml-[4px] flex items-center gap-1"><svg class="t"><use href="#twopt"/></svg><span>两点</span></div>
        <div class="ml-[7px] flex items-center gap-1"><svg class="t"><use href="#par"/></svg><span>平行</span></div>
        <div class="ml-[7px] flex items-center gap-1"><svg class="t"><use href="#angle"/></svg><span>点角</span></div>
        <span class="ml-[7px] w-0 h-0 border-x-[3px] border-t-[3px] border-x-transparent border-t-black"></span>
        <div class="ml-[5px] flex items-center gap-1"><svg class="t"><use href="#axis3"/></svg><span>三点辅轴</span></div>
        <span class="ml-[7px] w-0 h-0 border-x-[3px] border-t-[3px] border-x-transparent border-t-black"></span>
        <div class="ml-[7px] flex items-center gap-1"><svg class="t"><use href="#brush"/></svg><span>删除辅轴</span></div>
        <div class="ml-[7px] flex items-center gap-1"><svg class="t"><use href="#dim"/></svg><span>尺寸标注</span></div>
        <span class="ml-[7px] w-0 h-0 border-x-[3px] border-t-[3px] border-x-transparent border-t-black"></span>
      </div>
    </div>
    <!-- draw toolbar -->
    <div class="h-[30px] pt-[2px] flex">
      <div class="ml-px w-[854px] h-[28px] bg-[#f8f8f8] flex items-center">
        <span class="ml-[4px] w-[2px] h-[14px] border-l-2 border-dotted border-[#aaa]"></span>
        <div class="ml-[3px] flex items-center gap-1"><svg class="t"><use href="#pointer"/></svg><span>选择</span></div>
        <span class="ml-[8px] w-0 h-0 border-x-[3px] border-t-[3px] border-x-transparent border-t-black"></span>
        <span class="ml-[5px] w-px h-[18px] bg-[#bbb]"></span>
        <div class="ml-[4px] w-[51px] h-[24px] border border-[#0078d7] bg-[#e5f1fb] flex items-center gap-[3px] pl-[3px]"><svg class="t"><use href="#line"/></svg><span>直线</span></div>
        <div class="ml-[3px] flex items-center gap-1"><svg class="t"><use href="#ptlen"/></svg><span>点加长度</span></div>
        <div class="ml-[7px] flex items-center gap-1"><svg class="t"><use href="#arc"/></svg><span>三点画弧</span></div>
        <span class="ml-[7px] w-0 h-0 border-x-[3px] border-t-[3px] border-x-transparent border-t-black"></span>
        <div class="ml-[4px] w-[53px] h-[25px] bg-white flex items-center justify-end pr-[2px]"><span class="w-0 h-0 border-x-[3px] border-t-[3px] border-x-transparent border-t-black"></span></div>
        <div class="ml-[6px] flex items-center gap-1"><svg class="t"><use href="#square"/></svg><span>矩形</span></div>
        <span class="ml-[7px] w-px h-[18px] bg-[#bbb]"></span>
        <div class="ml-[5px] flex items-center gap-1"><svg class="t"><use href="#smart"/></svg><span>智能布置</span></div>
        <span class="ml-[5px] w-0 h-0 border-x-[3px] border-t-[3px] border-x-transparent border-t-black"></span>
        <span class="ml-[4px] w-px h-[18px] bg-[#bbb]"></span>
        <div class="ml-[5px] flex items-center gap-1"><svg class="t"><use href="#wallprop"/></svg><span>修改墙段属性</span></div>
        <div class="ml-[7px] flex items-center gap-1"><svg class="t"><use href="#check"/></svg><span>查改标高</span></div>
        <div class="ml-[7px] flex items-center gap-1"><svg class="t"><use href="#base"/></svg><span>墙底平齐基础底</span></div>
        <div class="ml-[6px] flex items-center gap-1"><svg class="t"><use href="#base"/></svg><span>平齐底板</span></div>
      </div>
      <div class="ml-[3px] w-[30px] h-[28px] bg-[#f8f8f8] flex items-center">
        <span class="ml-[3px] w-[2px] h-[14px] border-l-2 border-dotted border-[#aaa]"></span>
        <span class="ml-px flex-1 h-[26px] bg-white"></span>
      </div>
    </div>

    <!-- drawing canvas -->
    <div class="relative h-[510px] bg-black overflow-hidden">
      <svg class="w-[1200px] h-[510px]" viewBox="166 165 1200 510" font-family="Liberation Sans, sans-serif">
        <rect x="316" y="165" width="16" height="56" fill="#f5f000"/>
        <rect x="166" y="221" width="67" height="16" fill="#f5f000"/>
        <rect x="233.500" y="221.500" width="60" height="15" fill="#0000f0" stroke="#fff"/>
        <rect x="166" y="221.500" width="26" height="15" fill="#0000f0" stroke="#fff"/>
        <path d="M233 226.500h60M233 231.500h60M166 226.500h26M166 231.500h26" stroke="#fff"/>
        <rect x="166" y="494" width="150" height="16" fill="#f5f000"/>
        <circle cx="324" cy="502" r="14" fill="#7d00f0"/>
        <rect x="573" y="480" width="33" height="30" fill="#7d00f0"/>
        <path d="M578 215l3 5h-3z" fill="#7d00f0"/>
        <rect x="400" y="367" width="496" height="29" fill="#f20000"/>
        <rect x="1120" y="478" width="246" height="48" fill="#b3b3b3"/>
        <rect x="1244" y="478" width="43" height="47" fill="#000" stroke="#fff" stroke-width="2"/>
        <path d="M1112 470h16v24h24v16h-40z" fill="#7d00f0"/>
        <g stroke="#f00" stroke-width="1" shape-rendering="crispEdges" fill="none">
          <path d="M324.500 165V502M443.500 165V502M525.500 165V502M589.500 165V502M854.500 165V502M895.500 165V502M1120.500 165V502"/>
          <path d="M166 228.500H1120M166 381.500H1120M166 441.500H1120M166 502.500H1120M166 620.500H1120M1120 453.500H1366"/>
        </g>
        <g stroke="#008000" stroke-width="1" shape-rendering="crispEdges" fill="none">
          <path d="M1120 381.500H1366M1120 441.500H1366M759 453.500H1120M1200.500 381V502"/>
        </g>
        <path d="M1183 364l33 34M1183 424l33 34M1183 485l34 34M206 641l34 34" stroke="#008000" fill="none" shape-rendering="crispEdges"/>
        <path d="M166 601l40 40" stroke="#e00000" fill="none" shape-rendering="crispEdges"/>
        <g fill="none" stroke="#008000" stroke-dasharray="6 1">
          <circle cx="179" cy="228" r="13"/><circle cx="324" cy="178" r="13"/><circle cx="590" cy="178" r="13"/><circle cx="855" cy="178" r="13"/><circle cx="1120" cy="178" r="13"/><circle cx="179" cy="502" r="13"/>
        </g>
        <g font-size="15" text-anchor="middle">
          <text x="179" y="233" fill="#f0e040" font-size="14" font-weight="bold">A</text>
          <text x="324" y="183" fill="#3a3ab0" font-weight="bold">5</text>
          <text x="590" y="183" fill="#ddd">6</text>
          <text x="855" y="183" fill="#8fa8a8">7</text>
          <text x="1120" y="183" fill="#bbb">8</text>
          <text x="179" y="507" fill="#2a2ae0">A1</text>
        </g>
        <path d="M895 372v9h9M898 377h2v2h-2z" fill="none" stroke="#ff0" stroke-width="2"/>
        <text transform="translate(1206 483) rotate(-90)" font-size="15" fill="#a8a8a8" letter-spacing=".7"><tspan fill="#777">7</tspan>50·500</text>
        <path d="M221 625V585" stroke="#0f0" stroke-width="4"/>
        <path d="M221 576l-4 11h8z" fill="#0f0"/>
        <path d="M230 579l5 4 5-4M235 583v5" stroke="#0f0" fill="none" shape-rendering="crispEdges"/>
        <path d="M221 625h40" stroke="#f00" stroke-width="4"/>
        <path d="M258 620l13 5-13 5z" fill="#f00"/>
        <path d="M258 605l9 9M267 605l-9 9" stroke="#f00" shape-rendering="crispEdges"/>
      </svg>

      <!-- message dialog -->
      <div class="absolute left-[116px] top-[55px] w-[383px] h-[278px] border border-[#444] bg-[#efefef] flex flex-col">
        <div class="h-[29px] bg-white flex items-center pl-[7px] pr-[9px]">
          <svg class="w-4 h-4"><use href="#appmark"/></svg>
          <span class="ml-[5px] text-[#b0b0b0]">提示信息</span>
          <svg class="ml-auto w-[11px] h-[11px]" viewBox="0 0 11 11"><path d="M0 0l11 11M11 0L0 11" stroke="#888"/></svg>
        </div>
        <div class="mt-[6px] ml-[5px] w-[371px] h-[197px] border border-[#0078d7] flex flex-col">
          <div class="flex-1 flex min-h-0">
            <div class="flex-1 bg-white pl-px pt-[3px] text-black">起点底标高不能大于起点顶标高</div>
            <div class="w-[17px] flex flex-col items-center text-[#c4c4c4]">
              <svg class="mt-[5px] w-[10px] h-[10px]"><use href="#up"/></svg>
              <svg class="mt-auto mb-[3px] w-[10px] h-[10px]"><use href="#down"/></svg>
            </div>
          </div>
          <div class="h-[17px] flex items-center justify-between pl-[5px] pr-[22px] text-[#c4c4c4]">
            <svg class="w-[10px] h-[10px]"><use href="#left"/></svg>
            <svg class="w-[10px] h-[10px]"><use href="#right"/></svg>
          </div>
        </div>
        <button class="mt-[13px] ml-auto mr-[6px] w-[73px] h-[24px] border-2 border-[#0078d7] bg-[#e1e1e1] text-black">关闭</button>
      </div>
      <!-- annotation drawn over the screenshot -->
      <div class="absolute left-[79px] top-[57px] w-[272px] h-[71px] border-[7px] border-[#0000ff]"></div>
    </div>

    <!-- snap toolbar -->
    <div class="h-[30px] pt-[4px] flex">
      <div class="ml-px w-[208px] h-[23px] bg-[#f8f8f8] flex items-center">
        <span class="ml-[4px] w-[2px] h-[14px] border-l-2 border-dotted border-[#aaa]"></span>
        <div class="ml-[4px] flex items-center gap-1"><svg class="t"><use href="#ortho"/></svg><span>正交</span></div>
        <div class="ml-[4px] w-[75px] h-[23px] border border-[#0078d7] bg-[#e5f1fb] flex items-center gap-[2px] pl-[4px]"><svg class="t"><use href="#snap"/></svg><span>对象捕捉</span></div>
        <div class="ml-[3px] flex items-center gap-1"><svg class="t"><use href="#dyn"/></svg><span>动态输入</span></div>
      </div>
      <div class="ml-[3px] w-[675px] h-[23px] bg-[#f8f8f8] flex items-center">
        <span class="ml-[5px] w-[2px] h-[14px] border-l-2 border-dotted border-[#aaa]"></span>
        <div class="ml-[3px] flex items-center gap-1"><svg class="t"><use href="#cross"/></svg><span>交点</span></div>
        <div class="ml-[4px] w-[51px] h-[23px] border border-[#0078d7] bg-[#e5f1fb] flex items-center gap-[2px] pl-[3px]"><svg class="t"><use href="#perp"/></svg><span>垂点</span></div>
        <div class="w-[51px] h-[23px] border border-l-0 border-[#0078d7] bg-[#e5f1fb] flex items-center gap-[3px] pl-[3px]"><svg class="t"><use href="#midp"/></svg><span>中点</span></div>
        <div class="ml-[3px] flex items-center gap-1"><svg class="t"><use href="#vert"/></svg><span>顶点</span></div>
        <div class="ml-[7px] flex items-center gap-1"><svg class="t"><use href="#coord"/></svg><span>坐标</span></div>
        <span class="ml-[8px] w-[2px] h-[14px] border-l-2 border-dotted border-[#aaa]"></span>
        <div class="ml-[4px] w-[58px] h-[23px] bg-white flex items-center justify-between pl-[2px] pr-[3px]"><span>不偏移</span><span class="w-0 h-0 border-x-[3px] border-t-[3px] border-x-transparent border-t-black"></span></div>
        <span class="ml-[5px] w-px h-[18px] bg-[#bbb]"></span>
        <span class="ml-[2px] w-[17px] text-[#777] text-[13px]">X=</span>
        <div class="ml-px w-[58px] h-[22px] border border-[#777] flex items-center justify-end pr-[2px] text-[#777]"><span class="text-[13px] mr-[5px]">0</span><span class="flex flex-col gap-[5px]"><span class="block w-0 h-0 border-x-[3px] border-b-[3px] border-x-transparent border-b-[#555]"></span><span class="block w-0 h-0 border-x-[3px] border-t-[3px] border-x-transparent border-t-[#555]"></span></span></div>
        <span class="ml-px text-[#777] text-[13px]">mm</span>
        <span class="ml-[6px] w-[18px] text-[#777] text-[13px]">Y=</span>
        <div class="w-[58px] h-[22px] border border-[#777] flex items-center justify-end pr-[2px] text-[#777]"><span class="text-[13px] mr-[5px]">0</span><span class="flex flex-col gap-[5px]"><span class="block w-0 h-0 border-x-[3px] border-b-[3px] border-x-transparent border-b-[#555]"></span><span class="block w-0 h-0 border-x-[3px] border-t-[3px] border-x-transparent border-t-[#555]"></span></span></div>
        <span class="ml-px text-[#777] text-[13px]">mm</span>
        <span class="ml-[4px] w-px h-[18px] bg-[#bbb]"></span>
        <span class="ml-[3px] w-[11px] h-[11px] border border-[#888] bg-white"></span>
        <span class="ml-[9px]">旋转</span>
        <div class="ml-[5px] w-[67px] h-[22px] border border-[#777] flex items-center justify-end pr-[2px] text-[#777]"><span class="text-[13px] mr-[5px]">0.000</span><span class="flex flex-col gap-[5px]"><span class="block w-0 h-0 border-x-[3px] border-b-[3px] border-x-transparent border-b-[#555]"></span><span class="block w-0 h-0 border-x-[3px] border-t-[3px] border-x-transparent border-t-[#555]"></span></span></div>
        <span class="ml-[3px] text-[#777]">°</span>
      </div>
    </div>
  </section>
</main>

<!-- status bar -->
<footer class="h-[22px] flex items-stretch gap-[2px] pt-px pb-px whitespace-nowrap text-[#222] [&_i]:not-italic [&_i]:font-['Liberation_Mono',monospace] [&_i]:text-[10px] [&>div]:bg-[#f8f8f8] [&>div]:border [&>div]:border-[#e2e2e2] [&>div]:flex [&>div]:items-center [&>div]:pl-px">
  <div class="w-[148px]"><i>X=23593 Y=1505</i></div>
  <div class="w-[78px]">层高<i>:4.5m</i></div>
  <div class="w-[98px]">底标高<i>:-0.05m</i></div>
  <div class="w-[48px]"><i>0</i></div>
  <div class="w-[914px]">按鼠标左键指定下一个端点，按右键中止或<i>ESC</i>取消，或按<i>Ctrl+</i>左键回退</div>
  <div class="flex-1"><i>38.9 FPS</i></div>
</footer>

<!-- windows taskbar -->
<div class="h-[41px] bg-[#0c181c] flex items-center text-white whitespace-nowrap">
  <div class="w-[48px] h-full bg-[#0a0a0a] flex items-center justify-center">
    <svg class="w-4 h-4" viewBox="0 0 16 16"><path d="M0 2.300l6.500-.9v6.200H0zM7.400 1.300L16 0v7.600H7.400zM0 8.400h6.500v6.200L0 13.700zM7.400 8.400H16V16l-8.600-1.300z" fill="#fff"/></svg>
  </div>
  <div class="w-[344px] h-full bg-[#f2f2f2] flex items-center text-[#444]">
    <span class="ml-[11px] w-[19px] h-[19px] rounded-full border-[3px] border-[#222]"></span>
    <span class="ml-[10px] text-[14px]">在这里输入你要搜索的内容</span>
    <svg class="ml-[107px] w-[12px] h-[18px]" viewBox="0 0 12 18"><rect x="3" y="1" width="6" height="10" rx="3" fill="none" stroke="#444"/><path d="M1 8c0 6 10 6 10 0M6 13v4M3 17h6" fill="none" stroke="#444"/></svg>
  </div>
  <svg class="ml-[16px] w-4 h-4" viewBox="0 0 16 16"><path d="M1 1h6M1 15h6M0 4h9v8H0z" fill="none" stroke="#fff" stroke-width="1.200"/><path d="M12 1h3M12 6h3v4h-3zM12 15h3" fill="none" stroke="#fff"/></svg>
  <svg class="ml-[30px] w-[24px] h-[24px]" viewBox="0 0 24 24"><path d="M12 12C4 12 2 8 4 3c4-2 8 0 8 9zM12 12c0-8 4-10 9-8 2 4 0 8-9 8zM12 12c8 0 10 4 8 9-4 2-8 0-8-9zM12 12c0 8-4 10-9 8-2-4 0-8 9-8z" fill="#e8e8e8"/></svg>
  <div class="ml-[14px] w-[150px] h-[34px] bg-[#39474c] border border-[#4c5a5f] flex items-center text-[#aab2b5]">
    <svg class="ml-[3px] w-[20px] h-[20px]" viewBox="0 0 20 20"><path d="M17 12H7c.5 3 5 4 8.500 1.500V17c-6 3-12 0-12-6.500C3.500 5 8 2 12 3c4 1 5.500 5 5 9zM7 9h6c0-3.500-5.500-3.500-6 0z" fill="#3a9be8"/></svg>
    <span class="ml-[1px]">搜索网页和文件</span>
    <svg class="ml-[11px] w-[20px] h-[20px]" viewBox="0 0 20 20"><circle cx="9" cy="9" r="7" fill="none" stroke="#8d979b" stroke-width="1.400"/><path d="M14 14l5 5" stroke="#8d979b" stroke-width="1.400"/></svg>
  </div>
  <svg class="ml-[13px] w-[24px] h-[24px]" viewBox="0 0 24 24"><path d="M13 5a8 8 0 1 0 7 9c-1 2-4 4-7 3a5 5 0 1 1 3-8" fill="none" stroke="#ddd" stroke-width="1.800"/><path d="M17 3c3 0 4 2 4 5l2 3H13l2-3c0-3 0-5 2-5z" fill="#f0a020"/></svg>
  <div class="ml-[19px] w-[41px] h-full flex items-center justify-center border-b-2 border-[#76b9ed] box-border">
    <svg class="w-[24px] h-[24px]" viewBox="0 0 24 24"><rect width="24" height="24" rx="4" fill="#2fb86a"/><path d="M7 5v14M7 11h10M17 8v6" stroke="#fff" stroke-width="2.500"/></svg>
  </div>
  <div class="ml-[9px] w-[40px] h-full flex items-center justify-center border-b-2 border-[#76b9ed]">
    <svg class="w-[24px] h-[24px]" viewBox="0 0 24 24"><rect width="24" height="24" rx="3" fill="#1d72c8"/><path d="M3 8h9l1 2 8-2v12H3z" fill="#e8dcc0"/><circle cx="15" cy="9" r="4" fill="#a8d4f4" stroke="#fff"/></svg>
  </div>
  <div class="ml-[9px] w-[40px] h-full flex items-center justify-center border-b-2 border-[#76b9ed]">
    <div class="w-[24px] h-[24px] rounded-[3px] bg-[#b5651d] text-[#ead9b8] text-[9px] font-bold flex items-center justify-center">PDF</div>
  </div>
  <div class="ml-[146px] w-[17px] h-full bg-[#1a272c] flex flex-col items-center justify-center gap-[6px] text-[#ddd]">
    <svg class="w-[10px] h-[10px]"><use href="#up"/></svg>
    <svg class="w-[10px] h-[10px]"><use href="#down"/></svg>
  </div>
  <svg class="ml-[19px] w-4 h-4" viewBox="0 0 16 16"><circle cx="5" cy="8" r="2.500" fill="none" stroke="#fff"/><circle cx="11" cy="4" r="2.500" fill="none" stroke="#fff"/><path d="M1 15c0-4 7-4 7 0M8 8c2-1 6 0 6 4" fill="none" stroke="#fff"/></svg>
  <svg class="ml-[24px] w-[12px] h-[12px]" viewBox="0 0 12 12"><path d="M0 9l6-6 6 6" fill="none" stroke="#fff" stroke-width="1.300"/></svg>
  <svg class="ml-[11px] w-4 h-4" viewBox="0 0 16 16"><rect x="5" y="5" width="10" height="8" fill="none" stroke="#fff"/><path d="M1 5h5M2 2v3M5 2v3M3.500 8v5" stroke="#fff"/></svg>
  <svg class="ml-[10px] w-[14px] h-[14px]" viewBox="0 0 14 14"><path d="M0 13A13 13 0 0 1 13 0M3 13A10 10 0 0 1 13 3M6 13a7 7 0 0 1 7-7M9 13a4 4 0 0 1 4-4" fill="none" stroke="#ccc" stroke-dasharray="1.500 1"/></svg>
  <svg class="ml-[8px] w-4 h-4" viewBox="0 0 16 16"><path d="M1 6h3l4-4v12l-4-4H1z" fill="none" stroke="#fff"/><path d="M10 5c1 2 1 4 0 6M12 3c2 3 2 7 0 10" fill="none" stroke="#fff"/></svg>
  <svg class="ml-[8px] w-[23px] h-[15px]" viewBox="0 0 23 15"><rect x=".5" y=".5" width="22" height="14" fill="none" stroke="#fff"/><path d="M3 4h17M3 7h17" stroke="#fff" stroke-dasharray="1 1"/><path d="M6 11h11" stroke="#fff"/></svg>
  <span class="ml-[10px] text-[14px]">中</span>
  <div class="ml-[13px] w-4 h-[18px] rounded-[3px] bg-[#e8431f] flex items-center justify-center text-[13px] font-bold">S</div>
  <div class="ml-[17px] w-[59px] flex flex-col items-center gap-[6px] text-[13px]">
    <span>10:41</span>
    <span class="text-[12px]">2018/11/3</span>
  </div>
  <div class="ml-[19px] relative w-[20px] h-[30px]">
    <svg class="w-4 h-4 mt-[2px]" viewBox="0 0 16 16"><path d="M0 0h16v12H6l-3 3v-3H0z" fill="#fff"/><path d="M3 3h10M3 6h10M3 9h10" stroke="#0c181c"/></svg>
    <span class="absolute left-[7px] top-[13px] w-[17px] h-[17px] rounded-full bg-[#4a4f52] text-[12px] font-bold flex items-center justify-center">1</span>
  </div>
</div>
</body>
</html>
